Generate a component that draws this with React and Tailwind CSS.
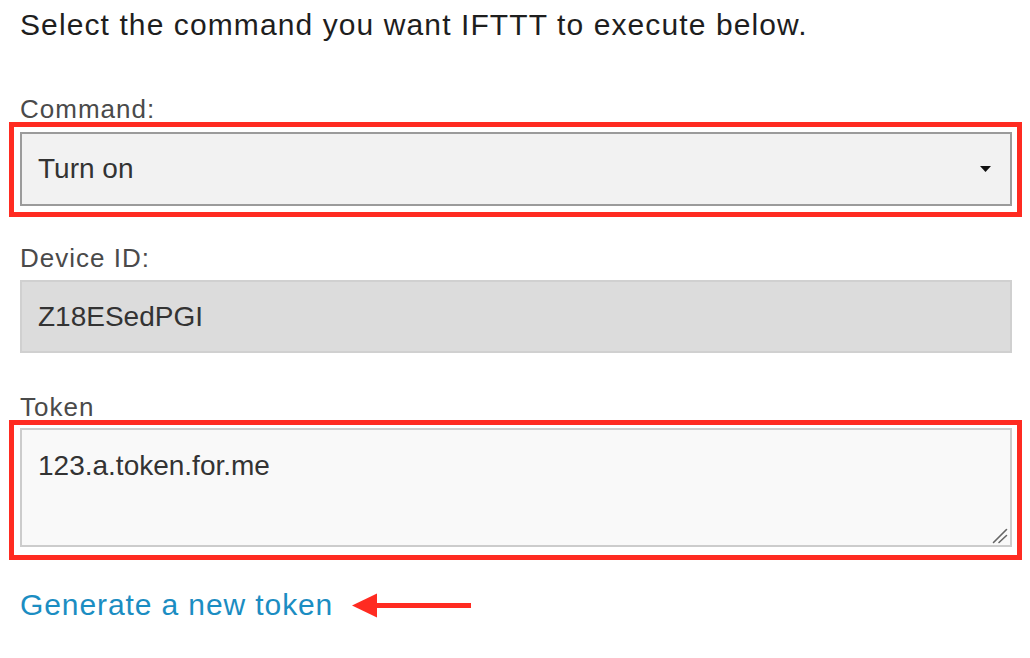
export default function App() {
  return (
    <div className="w-[1030px] h-[658px] overflow-hidden bg-white font-['Liberation_Sans',Arial,sans-serif] text-[#333]">
      <div className="pl-[20px] pt-[10px] text-[30px] leading-[30px] tracking-[1.1px] text-[#1e1e1e]">
        Select the command you want IFTTT to execute below.
      </div>

      <div className="mt-[56px] ml-[20px] text-[26px] leading-[26px] tracking-[1px] text-[#4a4a4a]">
        Command:
      </div>
      <div className="ml-[9px] w-[1013px] border-[5px] border-[#ff2b21] pt-[5px] pb-[6px] pl-[6px] pr-[5px]">
        <div className="h-[74px] border-2 border-[#9b9b9b] bg-[#f2f2f2] flex items-center justify-between pl-[16px] pr-[19px] text-[28px] leading-[28px] text-[#333]">
          <span>Turn on</span>
          <svg width="11" height="6" viewBox="0 0 11 6">
            <path d="M0 0 H11 L5.5 6 Z" fill="#111" />
          </svg>
        </div>
      </div>

      <div className="mt-[28px] ml-[20px] text-[26px] leading-[26px] tracking-[1px] text-[#4a4a4a]">
        Device ID:
      </div>
      <div className="mt-[9px] ml-[20px] w-[992px] h-[73px] border-2 border-[#d0d0d0] bg-[#dcdcdc] flex items-center pl-[16px] text-[28px] leading-[28px] text-[#333]">
        Z18ESedPGI
      </div>

      <div className="mt-[41px] ml-[20px] text-[26px] leading-[26px] tracking-[1px] text-[#4a4a4a]">
        Token
      </div>
      <div className="ml-[9px] w-[1013px] border-[5px] border-[#ff2b21] pt-[3px] pb-[8px] pl-[6px] pr-[5px]">
        <div className="relative h-[119px] border-2 border-[#cccccc] bg-[#f9f9f9] pl-[16px] pt-[22px] text-[28px] leading-[28px] text-[#333]">
          123.a.token.for.me
          <svg className="absolute right-[2px] bottom-[1px]" width="16" height="16" viewBox="0 0 16 16">
            <path d="M1.5 14.5 L14.5 1.5" stroke="#666" strokeWidth="1.6" strokeLinecap="round" />
            <path d="M7 14.5 L14.5 7.5" stroke="#666" strokeWidth="1.6" strokeLinecap="round" />
          </svg>
        </div>
      </div>

      <div className="mt-[30px] ml-[20px] h-[30px] flex items-center">
        <a className="text-[30px] leading-[30px] tracking-[0.9px] text-[#1b8dc2]">Generate a new token</a>
        <svg className="ml-[18px]" width="120" height="26" viewBox="0 0 120 26">
          <path d="M1 13.5 L26 1.5 L26 25.5 Z" fill="#ff2b21" />
          <rect x="25" y="11" width="95" height="5" fill="#ff2b21" />
        </svg>
      </div>
    </div>
  );
}
